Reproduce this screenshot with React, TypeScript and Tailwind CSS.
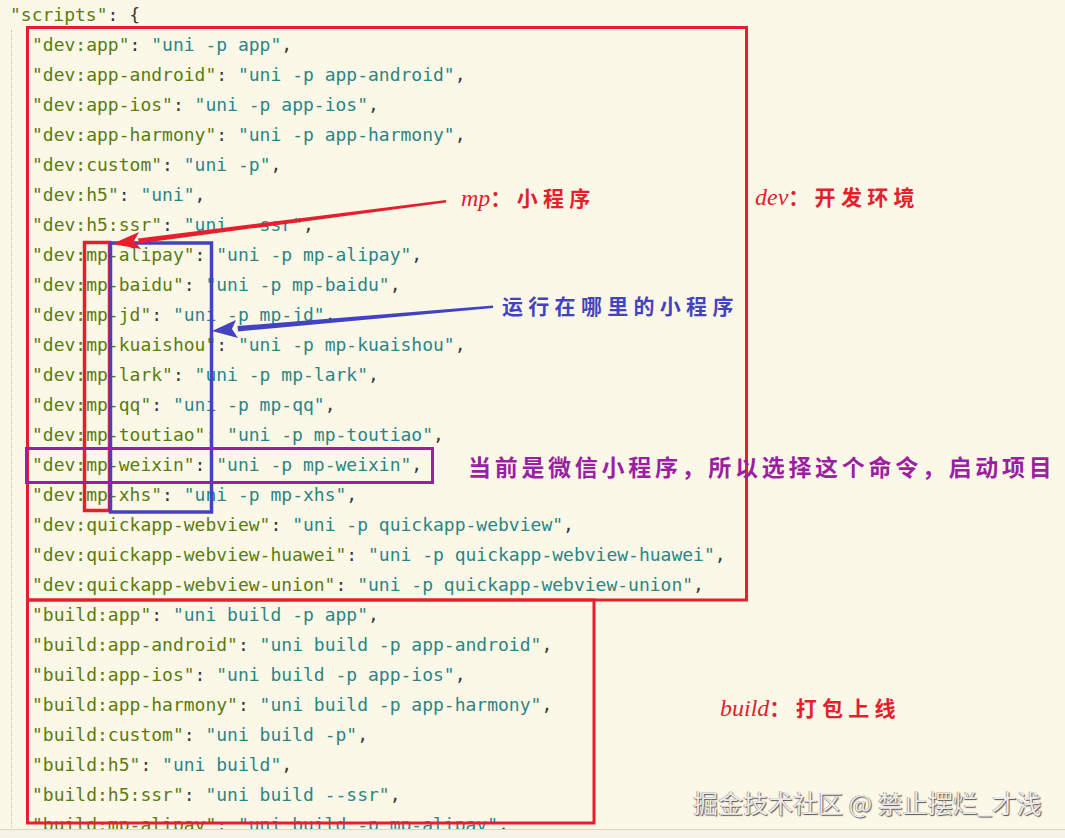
import React from "react";

type Entry = { k: string; v: string };

const devScripts: Entry[] = [
  { k: "dev:app", v: "uni -p app" },
  { k: "dev:app-android", v: "uni -p app-android" },
  { k: "dev:app-ios", v: "uni -p app-ios" },
  { k: "dev:app-harmony", v: "uni -p app-harmony" },
  { k: "dev:custom", v: "uni -p" },
  { k: "dev:h5", v: "uni" },
  { k: "dev:h5:ssr", v: "uni --ssr" },
  { k: "dev:mp-alipay", v: "uni -p mp-alipay" },
  { k: "dev:mp-baidu", v: "uni -p mp-baidu" },
  { k: "dev:mp-jd", v: "uni -p mp-jd" },
  { k: "dev:mp-kuaishou", v: "uni -p mp-kuaishou" },
  { k: "dev:mp-lark", v: "uni -p mp-lark" },
  { k: "dev:mp-qq", v: "uni -p mp-qq" },
  { k: "dev:mp-toutiao", v: "uni -p mp-toutiao" },
  { k: "dev:mp-weixin", v: "uni -p mp-weixin" },
  { k: "dev:mp-xhs", v: "uni -p mp-xhs" },
  { k: "dev:quickapp-webview", v: "uni -p quickapp-webview" },
  { k: "dev:quickapp-webview-huawei", v: "uni -p quickapp-webview-huawei" },
  { k: "dev:quickapp-webview-union", v: "uni -p quickapp-webview-union" },
];

const buildScripts: Entry[] = [
  { k: "build:app", v: "uni build -p app" },
  { k: "build:app-android", v: "uni build -p app-android" },
  { k: "build:app-ios", v: "uni build -p app-ios" },
  { k: "build:app-harmony", v: "uni build -p app-harmony" },
  { k: "build:custom", v: "uni build -p" },
  { k: "build:h5", v: "uni build" },
  { k: "build:h5:ssr", v: "uni build --ssr" },
  { k: "build:mp-alipay", v: "uni build -p mp-alipay" },
];

const Line = ({ e }: { e: Entry }) => (
  <div className="h-[30px] leading-[30px] whitespace-pre">
    <span className="text-[#5b7b0e]">"{e.k}"</span>
    <span className="text-[#3a3a3a]">: </span>
    <span className="text-[#2b8585]">"{e.v}"</span>
    <span className="text-[#3a3a3a]">,</span>
  </div>
);

const cjk = "font-['Noto_Sans_CJK_SC',sans-serif] font-bold whitespace-nowrap";
const italicSerif = "font-['Liberation_Serif',serif] italic text-[24px]";

export default function App() {
  return (
    <div className="relative w-[1065px] h-[838px] overflow-hidden bg-[#fcf8e8]">
      {/* editor */}
      <div className="h-[830px] overflow-hidden border-b border-[#dcd7c2] pl-[10px] font-['DejaVu_Sans_Mono',monospace] text-[18px]">
        <div className="h-[30px] leading-[30px] whitespace-pre">
          <span className="text-[#5b7b0e]">"scripts"</span>
          <span className="text-[#3a3a3a]">: {"{"}</span>
        </div>
        <div className="ml-[1px] border-l border-dotted border-[#c9c4b0] pl-[20px]">
          {devScripts.map((e) => (
            <Line key={e.k} e={e} />
          ))}
          {buildScripts.map((e) => (
            <Line key={e.k} e={e} />
          ))}
        </div>
      </div>
      <div className="h-[7px] bg-[#f5f2e6]" />

      {/* annotation drawing */}
      <svg className="absolute inset-0 pointer-events-none" width="1065" height="838" viewBox="0 0 1065 838">
        <rect x="27.5" y="27.5" width="719" height="572.5" fill="none" stroke="#e5202c" strokeWidth="3" />
        <rect x="27.5" y="600" width="566.5" height="223" fill="none" stroke="#e5202c" strokeWidth="3" />
        <rect x="84.5" y="242.5" width="25" height="268" fill="none" stroke="#e5202c" strokeWidth="3.5" />
        <rect x="110.5" y="243" width="101" height="269" fill="none" stroke="#4343c2" strokeWidth="3.5" />
        <rect x="26.5" y="448.5" width="406" height="34" fill="none" stroke="#9a1fa3" strokeWidth="3" />
        {/* red arrow */}
        <polygon points="446,200 446,202.5 139,243.5 138,238.5" fill="#e5202c" />
        <polygon points="112,244 139,232 134,241 141,249" fill="#e5202c" />
        {/* blue arrow */}
        <polygon points="493,305.5 493,308 238,331.5 237.5,326" fill="#4343c2" />
        <polygon points="212,331 236,320 232,329 238,338" fill="#4343c2" />
      </svg>

      {/* annotation labels */}
      <div className="absolute left-[461px] top-[182px] flex items-center h-[32px] text-[#e5202c]">
        <span className={italicSerif}>mp</span>
        <span className={`${cjk} text-[21px] tracking-[5.3px]`}>：小程序</span>
      </div>
      <div className="absolute left-[755px] top-[181px] flex items-center h-[32px] text-[#e5202c]">
        <span className={italicSerif}>dev</span>
        <span className={`${cjk} text-[21px] tracking-[5.3px]`}>：开发环境</span>
      </div>
      <div className={`absolute left-[502px] top-[289px] h-[32px] leading-[32px] text-[21px] tracking-[5.3px] text-[#4343c2] ${cjk}`}>
        运行在哪里的小程序
      </div>
      <div className={`absolute left-[468px] top-[449px] h-[34px] leading-[34px] text-[23px] tracking-[3.7px] text-[#9a1fa3] ${cjk}`}>
        当前是微信小程序，所以选择这个命令，启动项目
      </div>
      <div className="absolute left-[720px] top-[692px] flex items-center h-[32px] text-[#e5202c]">
        <span className={italicSerif}>build</span>
        <span className={`${cjk} text-[21px] tracking-[5.3px]`}>：打包上线</span>
      </div>
      <div className="absolute left-[693px] top-[785px] h-[34px] leading-[34px] text-[25px] whitespace-pre text-[#ececec] font-['Noto_Sans_CJK_SC',sans-serif] [text-shadow:1px_1px_1px_#555,-0.5px_-0.5px_0_#777]">
        掘金技术社区 @ 禁止摆烂_才浅
      </div>
    </div>
  );
}
